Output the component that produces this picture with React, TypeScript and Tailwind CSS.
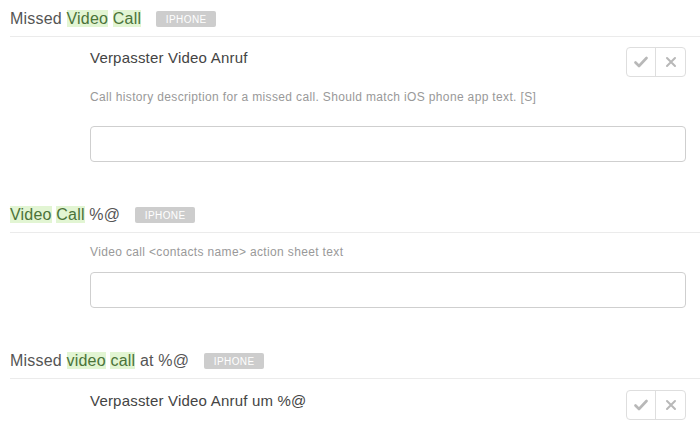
import React from "react";

const HL = ({ children }: { children: React.ReactNode }) => (
  <span className="bg-[#e2f5d3] text-[#4b7339]">{children}</span>
);

const Badge = () => (
  <span className="ml-[15px] inline-flex h-[16px] w-[60px] items-center justify-center rounded-[2px] bg-[#cdcdcd] text-[10px] tracking-[0.4px] text-white">
    IPHONE
  </span>
);

const Buttons = () => (
  <div className="flex h-[30px] overflow-hidden rounded-[4px] border border-[#dedede] bg-white">
    <div className="flex w-[29px] items-center justify-center border-r border-[#dedede]">
      <svg width="14" height="12" viewBox="0 0 14 12">
        <path d="M1.5 6.5 L5 10 L12.5 2" fill="none" stroke="#b8b8b8" strokeWidth="2.6" strokeLinecap="round" strokeLinejoin="round" />
      </svg>
    </div>
    <div className="flex w-[29px] items-center justify-center">
      <svg width="12" height="12" viewBox="0 0 12 12">
        <path d="M2 2 L10 10 M10 2 L2 10" fill="none" stroke="#b8b8b8" strokeWidth="2" strokeLinecap="round" />
      </svg>
    </div>
  </div>
);

const Header = ({ children, className = "" }: { children: React.ReactNode; className?: string }) => (
  <div className={"flex h-[35px] items-center border-b border-[#ebebeb] text-[16px] tracking-[0.2px] text-[#555] " + className}>
    {children}
    <Badge />
  </div>
);

const Translation = ({ text, className = "" }: { text: string; className?: string }) => (
  <div className={"flex items-start justify-between pl-[80px] pr-[14px] " + className}>
    <div className="mt-[1px] text-[15px] leading-[20px] tracking-[0.2px] text-[#444]">{text}</div>
    <Buttons />
  </div>
);

const Desc = ({ text, className = "" }: { text: string; className?: string }) => (
  <div className={"pl-[80px] text-[12px] leading-[16px] tracking-[0.35px] text-[#999] " + className}>{text}</div>
);

const Input = ({ className = "" }: { className?: string }) => (
  <div className={"ml-[80px] mr-[14px] h-[36px] rounded-[4px] border border-[#cfcfcf] bg-white " + className} />
);

export default function App() {
  return (
    <div
      className="h-[422px] w-[700px] overflow-hidden bg-white pl-[10px]"
      style={{ fontFamily: '"Liberation Sans", Arial, sans-serif' }}
    >
      <Header className="mt-[2px]">
        <span>
          Missed <HL>Video</HL> <HL>Call</HL>
        </span>
      </Header>
      <Translation text="Verpasster Video Anruf" className="mt-[10px]" />
      <Desc
        text="Call history description for a missed call. Should match iOS phone app text. [S]"
        className="mt-[12px]"
      />
      <Input className="mt-[21px]" />

      <Header className="mt-[36px]">
        <span>
          <HL>Video</HL> <HL>Call</HL> %@
        </span>
      </Header>
      <Desc text="Video call <contacts name> action sheet text" className="mt-[11px]" />
      <Input className="mt-[12px]" />

      <Header className="mt-[36px]">
        <span>
          Missed <HL>video</HL> <HL>call</HL> at %@
        </span>
      </Header>
      <Translation text="Verpasster Video Anruf um %@" className="mt-[11px]" />
    </div>
  );
}
